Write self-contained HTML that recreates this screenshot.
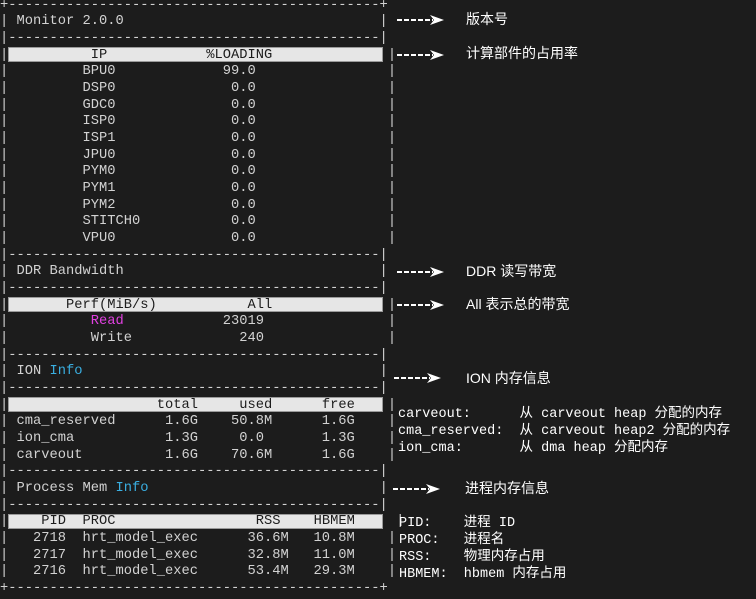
<!DOCTYPE html>
<html><head><meta charset="utf-8"><style>
body{margin:0;background:#1c1c1c;width:756px;height:597px;overflow:hidden;position:relative;font-family:"Liberation Mono","Noto Sans CJK SC",monospace;}
.w{position:absolute;left:0;top:2px;width:756px;height:597px;}
.r{position:absolute;left:0;height:16.66px;line-height:16.66px;font-size:13.75px;color:#d2d2d2;white-space:pre;}
.bar{position:absolute;left:8px;width:375px;height:15px;background:#e6e6e6;border:1px solid #9a9a9a;box-sizing:border-box;}
.h{color:#1c1c1c}
.m{color:#e040e0}.c{color:#3aaee0}
.a{position:absolute;left:397px;color:#fff;font-size:13.5px;white-space:pre;line-height:17px;font-family:"Liberation Mono","Noto Sans CJK SC",monospace;}
.t{position:absolute;left:466px;color:#fff;font-size:14px;font-family:"Liberation Sans","Noto Sans CJK SC",sans-serif;line-height:17px;white-space:pre;}
svg.ar{position:absolute;left:397px;width:50px;height:12px;}
</style></head><body>
<div class="w">
<div class="bar" style="top:45px"></div>
<div class="bar" style="top:295px"></div>
<div class="bar" style="top:395px"></div>
<div class="bar" style="top:512px"></div>
<div class="r" style="top:-4.3px">+---------------------------------------------+</div>
<div class="r" style="top:12.3px">| Monitor 2.0.0                               |</div>
<div class="r" style="top:29px">|---------------------------------------------|</div>
<div class="r" style="top:45.7px">|<span class="h">          IP            %LOADING            </span>  |</div>
<div class="r" style="top:62.3px">|         BPU0             99.0                |</div>
<div class="r" style="top:79px">|         DSP0              0.0                |</div>
<div class="r" style="top:95.6px">|         GDC0              0.0                |</div>
<div class="r" style="top:112.3px">|         ISP0              0.0                |</div>
<div class="r" style="top:129px">|         ISP1              0.0                |</div>
<div class="r" style="top:145.6px">|         JPU0              0.0                |</div>
<div class="r" style="top:162.3px">|         PYM0              0.0                |</div>
<div class="r" style="top:179px">|         PYM1              0.0                |</div>
<div class="r" style="top:195.6px">|         PYM2              0.0                |</div>
<div class="r" style="top:212.3px">|         STITCH0           0.0                |</div>
<div class="r" style="top:229px">|         VPU0              0.0                |</div>
<div class="r" style="top:245.6px">|---------------------------------------------|</div>
<div class="r" style="top:262.3px">| DDR Bandwidth                               |</div>
<div class="r" style="top:279px">|---------------------------------------------|</div>
<div class="r" style="top:295.6px">|<span class="h">       Perf(MiB/s)           All            </span>  |</div>
<div class="r" style="top:312.3px">|          <span class="m">Read</span>            23019               |</div>
<div class="r" style="top:329px">|          Write             240               |</div>
<div class="r" style="top:345.6px">|---------------------------------------------|</div>
<div class="r" style="top:362.3px">| ION <span class="c">Info</span>                                    |</div>
<div class="r" style="top:379px">|---------------------------------------------|</div>
<div class="r" style="top:395.6px">|<span class="h">                  total     used      free  </span>  |</div>
<div class="r" style="top:412.3px">| cma_reserved      1.6G    50.8M      1.6G    |</div>
<div class="r" style="top:429px">| ion_cma           1.3G     0.0       1.3G    |</div>
<div class="r" style="top:445.6px">| carveout          1.6G    70.6M      1.6G    |</div>
<div class="r" style="top:462.3px">|---------------------------------------------|</div>
<div class="r" style="top:479px">| Process Mem <span class="c">Info</span>                            |</div>
<div class="r" style="top:495.6px">|---------------------------------------------|</div>
<div class="r" style="top:512.3px">|<span class="h">    PID  PROC                 RSS    HBMEM   </span>  |</div>
<div class="r" style="top:529px">|   2718  hrt_model_exec      36.6M   10.8M    |</div>
<div class="r" style="top:545.6px">|   2717  hrt_model_exec      32.8M   11.0M    |</div>
<div class="r" style="top:562.3px">|   2716  hrt_model_exec      53.4M   29.3M    |</div>
<div class="r" style="top:579px">+---------------------------------------------+</div>
</div>

<svg class="ar" style="top:14px" viewBox="0 0 50 12"><line x1="0" y1="6" x2="36" y2="6" stroke="#fff" stroke-width="2" stroke-dasharray="5,2"/><polygon points="33,1 47,6 33,11 37,6" fill="#fff"/></svg>
<svg class="ar" style="top:49px" viewBox="0 0 50 12"><line x1="0" y1="6" x2="36" y2="6" stroke="#fff" stroke-width="2" stroke-dasharray="5,2"/><polygon points="33,1 47,6 33,11 37,6" fill="#fff"/></svg>
<svg class="ar" style="top:266px" viewBox="0 0 50 12"><line x1="0" y1="6" x2="36" y2="6" stroke="#fff" stroke-width="2" stroke-dasharray="5,2"/><polygon points="33,1 47,6 33,11 37,6" fill="#fff"/></svg>
<svg class="ar" style="top:299px" viewBox="0 0 50 12"><line x1="0" y1="6" x2="36" y2="6" stroke="#fff" stroke-width="2" stroke-dasharray="5,2"/><polygon points="33,1 47,6 33,11 37,6" fill="#fff"/></svg>
<svg class="ar" style="top:372px;left:394px" viewBox="0 0 50 12"><line x1="0" y1="6" x2="36" y2="6" stroke="#fff" stroke-width="2" stroke-dasharray="5,2"/><polygon points="33,1 47,6 33,11 37,6" fill="#fff"/></svg>
<svg class="ar" style="top:483px;left:393px" viewBox="0 0 50 12"><line x1="0" y1="6" x2="36" y2="6" stroke="#fff" stroke-width="2" stroke-dasharray="5,2"/><polygon points="33,1 47,6 33,11 37,6" fill="#fff"/></svg>

<div class="t" style="top:11px">版本号</div>
<div class="t" style="top:45px">计算部件的占用率</div>
<div class="t" style="top:263px">DDR 读写带宽</div>
<div class="t" style="top:296px">All 表示总的带宽</div>
<div class="t" style="top:370px">ION 内存信息</div>
<div class="t" style="top:480px;left:465px">进程内存信息</div>

<div class="a" style="top:406px;left:398px">carveout:      从 carveout heap 分配的内存</div>
<div class="a" style="top:423px;left:398px">cma_reserved:  从 carveout heap2 分配的内存</div>
<div class="a" style="top:440px;left:398px">ion_cma:       从 dma heap 分配内存</div>
<div class="a" style="top:515px;left:399px">PID:    进程 ID</div>
<div class="a" style="top:532px;left:399px">PROC:   进程名</div>
<div class="a" style="top:549px;left:399px">RSS:    物理内存占用</div>
<div class="a" style="top:566px;left:399px">HBMEM:  hbmem 内存占用</div>
</body></html>
